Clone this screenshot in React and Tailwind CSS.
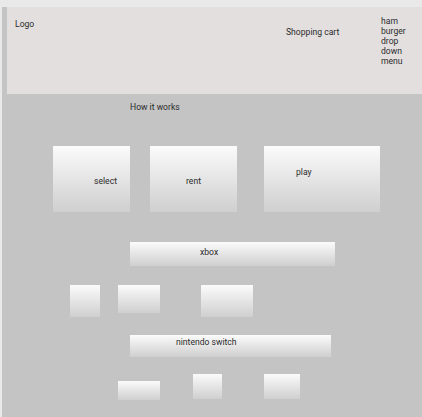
import React from "react";

const box = "bg-gradient-to-b from-[#fbfbfb] to-[#cfcfcf]";

export default function App() {
  return (
    <div className="min-h-[417px] w-[422px] bg-[#e9e9e9] pt-[7px] pl-[2px] font-['Roboto',sans-serif] text-[8.6px] leading-[11px] text-[#2b2b2b]">
      <div className="min-h-[410px] bg-[#c4c4c4] pl-[5px]">
        {/* Header */}
        <header className="grid h-[87px] grid-cols-[279px_95px_1fr] items-start bg-[#e3dfdf]">
          <span className="mt-[12px] pl-[8px]">Logo</span>
          <span className="mt-[20px]">Shopping cart</span>
          <div className="mt-[9px] flex flex-col leading-[10px]">
            <span>ham</span>
            <span>burger</span>
            <span>drop</span>
            <span>down</span>
            <span>menu</span>
          </div>
        </header>

        {/* How it works */}
        <div className="ml-[123px] mt-[8px]">How it works</div>

        {/* Steps */}
        <div className="mt-[33px] flex items-start">
          <div className={`${box} ml-[46px] h-[66px] w-[77px] pl-[41px] pt-[30px]`}>select</div>
          <div className={`${box} ml-[20px] h-[66px] w-[87px] pt-[30px] text-center`}>rent</div>
          <div className={`${box} ml-[27px] h-[66px] w-[116px] pl-[32px] pt-[21px]`}>play</div>
        </div>

        {/* Xbox */}
        <div className={`${box} ml-[123px] mt-[30px] h-[24px] w-[205px] pl-[70px] pt-[5px]`}>xbox</div>
        <div className="mt-[19px] flex items-start">
          <div className={`${box} ml-[63px] h-[32px] w-[30px]`} />
          <div className={`${box} ml-[18px] h-[28px] w-[42px]`} />
          <div className={`${box} ml-[41px] h-[32px] w-[52px]`} />
        </div>

        {/* Nintendo switch */}
        <div className={`${box} ml-[123px] mt-[18px] h-[22px] w-[201px] pl-[46px] pt-[2px]`}>nintendo switch</div>
        <div className="mt-[17px] flex items-start">
          <div className={`${box} ml-[111px] mt-[7px] h-[19px] w-[42px]`} />
          <div className={`${box} ml-[33px] h-[25px] w-[29px]`} />
          <div className={`${box} ml-[42px] h-[25px] w-[36px]`} />
        </div>
      </div>
    </div>
  );
}
